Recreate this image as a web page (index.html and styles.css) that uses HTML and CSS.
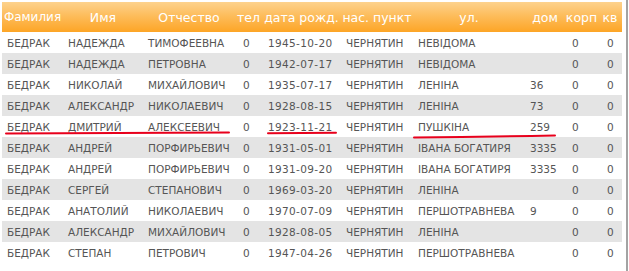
FILE: index.html
```html
<!DOCTYPE html>
<html lang="uk">
<head>
<meta charset="utf-8">
<title>Список</title>
<link rel="stylesheet" href="styles.css">
</head>
<body>
<div class="frame">
  <div class="wrap">
    <table class="people">
      <colgroup>
        <col class="c1"><col class="c2"><col class="c3"><col class="c4"><col class="c5">
        <col class="c6"><col class="c7"><col class="c8"><col class="c9"><col class="c10">
      </colgroup>
      <thead>
        <tr>
          <th>Фамилия</th><th>Имя</th><th>Отчество</th><th>тел</th><th>дата рожд.</th>
          <th>нас. пункт</th><th>ул.</th><th>дом</th><th>корп</th><th>кв</th>
        </tr>
      </thead>
      <tbody>
        <tr><td>БЕДРАК</td><td>НАДЕЖДА</td><td>ТИМОФЕЕВНА</td><td class="tel">0</td><td class="date">1945-10-20</td><td>ЧЕРНЯТИН</td><td>НЕВІДОМА</td><td></td><td class="korp">0</td><td class="kv">0</td></tr>
        <tr><td>БЕДРАК</td><td>НАДЕЖДА</td><td>ПЕТРОВНА</td><td class="tel">0</td><td class="date">1942-07-17</td><td>ЧЕРНЯТИН</td><td>НЕВІДОМА</td><td></td><td class="korp">0</td><td class="kv">0</td></tr>
        <tr><td>БЕДРАК</td><td>НИКОЛАЙ</td><td>МИХАЙЛОВИЧ</td><td class="tel">0</td><td class="date">1935-07-17</td><td>ЧЕРНЯТИН</td><td>ЛЕНІНА</td><td>36</td><td class="korp">0</td><td class="kv">0</td></tr>
        <tr><td>БЕДРАК</td><td>АЛЕКСАНДР</td><td>НИКОЛАЕВИЧ</td><td class="tel">0</td><td class="date">1928-08-15</td><td>ЧЕРНЯТИН</td><td>ЛЕНІНА</td><td>73</td><td class="korp">0</td><td class="kv">0</td></tr>
        <tr><td>БЕДРАК</td><td>ДМИТРИЙ</td><td>АЛЕКСЕЕВИЧ</td><td class="tel">0</td><td class="date">1923-11-21</td><td>ЧЕРНЯТИН</td><td>ПУШКІНА</td><td>259</td><td class="korp">0</td><td class="kv">0</td></tr>
        <tr><td>БЕДРАК</td><td>АНДРЕЙ</td><td>ПОРФИРЬЕВИЧ</td><td class="tel">0</td><td class="date">1931-05-01</td><td>ЧЕРНЯТИН</td><td>ІВАНА БОГАТИРЯ</td><td>3335</td><td class="korp">0</td><td class="kv">0</td></tr>
        <tr><td>БЕДРАК</td><td>АНДРЕЙ</td><td>ПОРФИРЬЕВИЧ</td><td class="tel">0</td><td class="date">1931-09-20</td><td>ЧЕРНЯТИН</td><td>ІВАНА БОГАТИРЯ</td><td>3335</td><td class="korp">0</td><td class="kv">0</td></tr>
        <tr><td>БЕДРАК</td><td>СЕРГЕЙ</td><td>СТЕПАНОВИЧ</td><td class="tel">0</td><td class="date">1969-03-20</td><td>ЧЕРНЯТИН</td><td>ЛЕНІНА</td><td></td><td class="korp">0</td><td class="kv">0</td></tr>
        <tr><td>БЕДРАК</td><td>АНАТОЛИЙ</td><td>НИКОЛАЕВИЧ</td><td class="tel">0</td><td class="date">1970-07-09</td><td>ЧЕРНЯТИН</td><td>ПЕРШОТРАВНЕВА</td><td>9</td><td class="korp">0</td><td class="kv">0</td></tr>
        <tr><td>БЕДРАК</td><td>АЛЕКСАНДР</td><td>МИХАЙЛОВИЧ</td><td class="tel">0</td><td class="date">1928-08-05</td><td>ЧЕРНЯТИН</td><td>ЛЕНІНА</td><td></td><td class="korp">0</td><td class="kv">0</td></tr>
        <tr><td>БЕДРАК</td><td>СТЕПАН</td><td>ПЕТРОВИЧ</td><td class="tel">0</td><td class="date">1947-04-26</td><td>ЧЕРНЯТИН</td><td>ПЕРШОТРАВНЕВА</td><td></td><td class="korp">0</td><td class="kv">0</td></tr>
      </tbody>
    </table>
    <svg class="marks" width="620" height="269" viewBox="0 0 620 269" aria-hidden="true">
      <path d="M4 131.6 Q110 131.4 227 130.4" />
      <path d="M266 131.2 Q300 131.2 334 130.8" />
      <path d="M412 135.4 Q480 135 553 133.4" />
    </svg>
  </div>
</div>
</body>
</html>
```

FILE: styles.css
```css
html, body {
  margin: 0;
  padding: 0;
  background: #ffffff;
}

.frame {
  width: 628px;
  height: 271px;
  border-right: 2px solid #a3a3a3;
  box-sizing: border-box;
  padding: 2px 0 0 2px;
  overflow: hidden;
}

.wrap {
  position: relative;
  width: 620px;
}

.people {
  width: 620px;
  border-collapse: collapse;
  table-layout: fixed;
  font-family: "DejaVu Sans", Verdana, sans-serif;
}

.c1 { width: 61px; }
.c2 { width: 80px; }
.c3 { width: 92px; }
.c4 { width: 27px; }
.c5 { width: 79px; }
.c6 { width: 72px; }
.c7 { width: 112px; }
.c8 { width: 40px; }
.c9 { width: 33px; }
.c10 { width: 24px; }

.people thead tr {
  height: 30px;
  background: linear-gradient(to bottom, #fdd28d 0%, #fdbd5c 45%, #fda526 100%);
}

.people th {
  color: #ffffff;
  font-weight: normal;
  font-size: 12.5px;
  text-align: center;
  padding: 0;
  white-space: nowrap;
  overflow: hidden;
}

.people th:first-child {
  font-size: 12px;
}

.people tbody tr {
  height: 21px;
}

.people tbody tr:nth-child(even) {
  background: #e4e4e4;
}

.people td {
  color: #555555;
  font-size: 10.5px;
  padding: 0 0 0 5px;
  white-space: nowrap;
  overflow: hidden;
}

.people td.tel { padding-left: 8px; }
.people td.date { padding-left: 6px; letter-spacing: 0.35px; }
.people td.korp { padding-left: 7px; }
.people td.kv { padding-left: 9px; }

.marks {
  position: absolute;
  left: 0;
  top: 0;
  pointer-events: none;
}

.marks path {
  fill: none;
  stroke: #e8001c;
  stroke-width: 2;
  stroke-linecap: round;
}
```
